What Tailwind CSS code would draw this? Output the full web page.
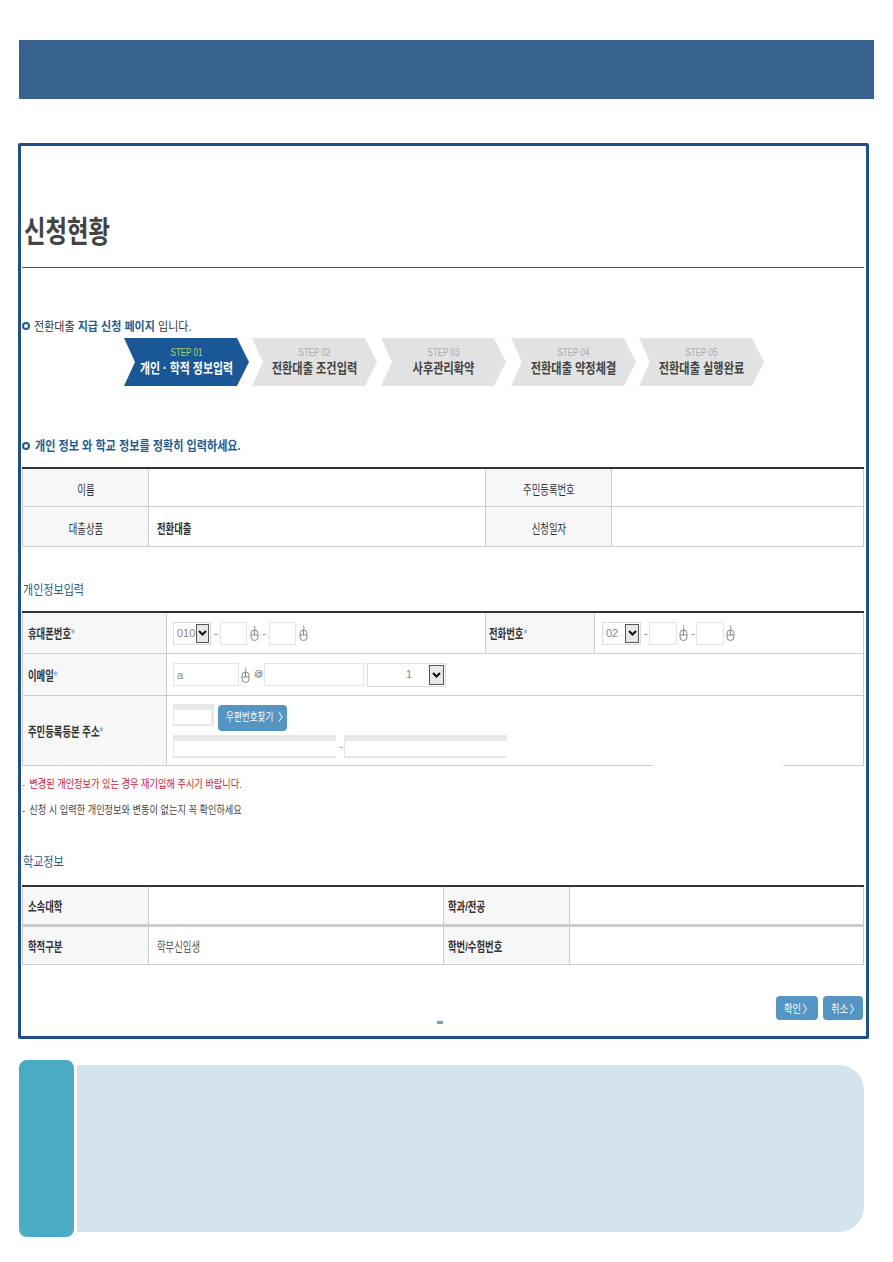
<!DOCTYPE html>
<html lang="ko">
  <head>
    <meta charset="utf-8" />
    <title>신청현황</title>
    <script src="https://cdn.jsdelivr.net/npm/@tailwindcss/browser@4"></script>
  </head>
  <body class="bg-white h-[1262px] overflow-hidden font-['Liberation_Sans','Noto_Sans_CJK_KR',sans-serif] text-[#333]">
    <!-- top bar -->
    <div class="ml-[19px] mt-[40px] w-[855px] h-[59px] bg-[#37618f]"></div>

    <!-- main frame -->
    <div class="relative ml-[18px] mt-[44px] w-[851px] h-[896px] border-[3px] border-[#1f4e8c] rounded-[2px] pl-[1px]">
      <div class="w-[842px]">
        <div class="h-[122px] border-b border-[#555] pt-[64px] pl-[2px]">
          <h1 class="text-[30px] leading-[44px] font-bold text-[#444] whitespace-nowrap origin-left scale-x-[.78]">신청현황</h1>
        </div>

        <div class="mt-[50px] h-[16px] flex items-center">
          <span class="w-[8px] h-[8px] rounded-full border-2 border-[#1f5d92]"></span>
          <p class="ml-[4px] text-[12px] whitespace-nowrap origin-left scale-x-[.92] translate-y-[1px]">전환대출 <b class="text-[#1f5d92]">지급 신청 페이지</b> 입니다.</p>
        </div>

        <!-- steps -->
        <div class="mt-[4px] flex pl-[102px] h-[48px]">
          <div class="w-[125px] h-[48px] bg-[#1a5796] text-center [clip-path:polygon(0_0,113px_0,125px_50%,113px_100%,0_100%,11px_50%)]">
            <p class="pt-[9px] text-[10px] leading-[11px] text-[#a6d96a] scale-x-[.8]">STEP 01</p>
            <p class="text-[14px] leading-[20px] font-bold text-white whitespace-nowrap scale-x-[.78]">개인 · 학적 정보입력</p>
          </div>
          <div class="ml-[3px] w-[125px] h-[48px] bg-[#e2e2e2] text-center [clip-path:polygon(0_0,113px_0,125px_50%,113px_100%,0_100%,11px_50%)]">
            <p class="pt-[9px] text-[10px] leading-[11px] text-[#aaa] scale-x-[.8]">STEP 02</p>
            <p class="text-[14px] leading-[20px] font-bold text-[#444] whitespace-nowrap scale-x-[.8]">전환대출 조건입력</p>
          </div>
          <div class="ml-[4px] w-[125px] h-[48px] bg-[#e2e2e2] text-center [clip-path:polygon(0_0,113px_0,125px_50%,113px_100%,0_100%,11px_50%)]">
            <p class="pt-[9px] text-[10px] leading-[11px] text-[#aaa] scale-x-[.8]">STEP 03</p>
            <p class="text-[14px] leading-[20px] font-bold text-[#444] whitespace-nowrap scale-x-[.8]">사후관리확약</p>
          </div>
          <div class="ml-[5px] w-[125px] h-[48px] bg-[#e2e2e2] text-center [clip-path:polygon(0_0,113px_0,125px_50%,113px_100%,0_100%,11px_50%)]">
            <p class="pt-[9px] text-[10px] leading-[11px] text-[#aaa] scale-x-[.8]">STEP 04</p>
            <p class="text-[14px] leading-[20px] font-bold text-[#444] whitespace-nowrap scale-x-[.8]">전환대출 약정체결</p>
          </div>
          <div class="ml-[3px] w-[125px] h-[48px] bg-[#e2e2e2] text-center [clip-path:polygon(0_0,113px_0,125px_50%,113px_100%,0_100%,11px_50%)]">
            <p class="pt-[9px] text-[10px] leading-[11px] text-[#aaa] scale-x-[.8]">STEP 05</p>
            <p class="text-[14px] leading-[20px] font-bold text-[#444] whitespace-nowrap scale-x-[.8]">전환대출 실행완료</p>
          </div>
        </div>

        <div class="mt-[52px] h-[16px] flex items-center">
          <span class="w-[8px] h-[8px] rounded-full border-2 border-[#1f5d92]"></span>
          <p class="ml-[5px] text-[13px] font-bold text-[#1f5d92] whitespace-nowrap origin-left scale-x-[.855]">개인 정보 와 학교 정보를 정확히 입력하세요.</p>
        </div>

        <!-- table 1 -->
        <table class="mt-[13px] w-[842px] table-fixed border-separate border-spacing-0 border-t-2 border-[#333] text-[13px] [&_td>span]:translate-y-[2px]">
          <colgroup><col class="w-[126px]" /><col class="w-[337px]" /><col class="w-[126px]" /><col /></colgroup>
          <tr class="h-[38px]">
            <td class="bg-[#f7f7f8] border-l border-b border-[#ccc] text-center"><span class="inline-block scale-x-[.72]">이름</span></td>
            <td class="border-l border-b border-[#ccc]"></td>
            <td class="bg-[#f7f7f8] border-l border-b border-[#ccc] text-center"><span class="inline-block scale-x-[.72] whitespace-nowrap">주민등록번호</span></td>
            <td class="border-l border-r border-b border-[#ccc]"></td>
          </tr>
          <tr class="h-[40px]">
            <td class="bg-[#f7f7f8] border-l border-b border-[#ccc] text-center"><span class="inline-block scale-x-[.72]">대출상품</span></td>
            <td class="border-l border-b border-[#ccc] pl-[8px]"><span class="inline-block origin-left scale-x-[.72] font-bold">전환대출</span></td>
            <td class="bg-[#f7f7f8] border-l border-b border-[#ccc] text-center"><span class="inline-block scale-x-[.72]">신청일자</span></td>
            <td class="border-l border-r border-b border-[#ccc]"></td>
          </tr>
        </table>

        <h2 class="mt-[35px] ml-[1px] h-[16px] text-[13px] leading-[16px] text-[#1f5d92] origin-left scale-x-[.85] whitespace-nowrap">개인정보입력</h2>

        <!-- table 2 -->
        <table class="mt-[13px] w-[842px] table-fixed border-separate border-spacing-0 border-t-2 border-[#333] text-[13px] [&_td>span]:translate-y-[1px]">
          <colgroup><col class="w-[144px]" /><col class="w-[319px]" /><col class="w-[109px]" /><col /></colgroup>
          <tr class="h-[41px]">
            <td class="bg-[#f7f7f8] border-l border-b border-[#ccc] pl-[5px] whitespace-nowrap"><span class="inline-block origin-left scale-x-[.72] font-bold">휴대폰번호<i class="text-[#7fb4d8] not-italic">*</i></span></td>
            <td class="border-l border-b border-[#ccc] pl-[6px]">
              <div class="flex items-center text-[11px] text-[#888]">
                <div class="w-[38px] h-[23px] border border-[#ddd] flex items-center justify-between pl-[3px] pr-[1px]">010<span class="w-[13px] h-[19px] border border-[#555] bg-[#e8e8e8] flex items-center justify-center"><svg width="9" height="6" viewBox="0 0 9 6"><path d="M1 1l3.5 3.5L8 1" fill="none" stroke="#111" stroke-width="2"/></svg></span></div>
                <span class="mx-[3px] w-[3px] text-center">-</span>
                <div class="w-[27px] h-[23px] border border-[#e5e5e5]"></div>
                <svg class="ml-[3px]" width="9" height="16" viewBox="0 0 9 16"><path d="M4.5 0.5c0 1.5 1 2 0 4.500M4.500 5v5M1 10h7M1 8.500a3.500 3.500 0 0 1 7 0v3.500a3.500 3.500 0 0 1-7 0z" fill="none" stroke="#888" stroke-width="1"/></svg>
                <span class="mx-[3px] w-[4px] text-center">-</span>
                <div class="w-[27px] h-[23px] border border-[#e5e5e5]"></div>
                <svg class="ml-[3px]" width="9" height="16" viewBox="0 0 9 16"><path d="M4.5 0.5c0 1.5 1 2 0 4.500M4.500 5v5M1 10h7M1 8.500a3.500 3.500 0 0 1 7 0v3.500a3.500 3.500 0 0 1-7 0z" fill="none" stroke="#888" stroke-width="1"/></svg>
              </div>
            </td>
            <td class="bg-[#f7f7f8] border-l border-b border-[#ccc] pl-[3px] whitespace-nowrap"><span class="inline-block origin-left scale-x-[.72] font-bold">전화번호<i class="text-[#7fb4d8] not-italic">*</i></span></td>
            <td class="border-l border-r border-b border-[#ccc] pl-[7px]">
              <div class="flex items-center text-[11px] text-[#888]">
                <div class="w-[39px] h-[23px] border border-[#ddd] flex items-center justify-between pl-[3px] pr-[1px]">02<span class="w-[14px] h-[19px] border border-[#555] bg-[#e8e8e8] flex items-center justify-center"><svg width="9" height="6" viewBox="0 0 9 6"><path d="M1 1l3.500 3.500L8 1" fill="none" stroke="#111" stroke-width="2"/></svg></span></div>
                <span class="mx-[3px] w-[2px] text-center">-</span>
                <div class="w-[28px] h-[23px] border border-[#e5e5e5]"></div>
                <svg class="ml-[2px]" width="9" height="16" viewBox="0 0 9 16"><path d="M4.5 0.5c0 1.5 1 2 0 4.500M4.500 5v5M1 10h7M1 8.500a3.500 3.500 0 0 1 7 0v3.500a3.500 3.500 0 0 1-7 0z" fill="none" stroke="#888" stroke-width="1"/></svg>
                <span class="mx-[3px] w-[2px] text-center">-</span>
                <div class="w-[28px] h-[23px] border border-[#e5e5e5]"></div>
                <svg class="ml-[2px]" width="9" height="16" viewBox="0 0 9 16"><path d="M4.5 0.5c0 1.5 1 2 0 4.500M4.500 5v5M1 10h7M1 8.500a3.500 3.500 0 0 1 7 0v3.500a3.500 3.500 0 0 1-7 0z" fill="none" stroke="#888" stroke-width="1"/></svg>
              </div>
            </td>
          </tr>
          <tr class="h-[42px]">
            <td class="bg-[#f7f7f8] border-l border-b border-[#ccc] pl-[5px] whitespace-nowrap"><span class="inline-block origin-left scale-x-[.72] font-bold">이메일<i class="text-[#7fb4d8] not-italic">*</i></span></td>
            <td colspan="3" class="border-l border-r border-b border-[#ccc] pl-[6px]">
              <div class="flex items-center text-[11px] text-[#888]">
                <div class="w-[66px] h-[23px] border border-[#e5e5e5] pl-[3px] leading-[23px]">a</div>
                <svg class="ml-[2px]" width="9" height="16" viewBox="0 0 9 16"><path d="M4.5 0.5c0 1.5 1 2 0 4.500M4.500 5v5M1 10h7M1 8.500a3.500 3.500 0 0 1 7 0v3.500a3.500 3.500 0 0 1-7 0z" fill="none" stroke="#888" stroke-width="1"/></svg>
                <span class="ml-[4px] w-[8px] text-[9px] text-[#555]">@</span>
                <div class="ml-[2px] w-[100px] h-[23px] border border-[#e5e5e5]"></div>
                <div class="ml-[3px] w-[79px] h-[24px] border border-[#ddd] flex items-center justify-between pl-[38px] pr-[1px]">1<span class="w-[15px] h-[20px] border border-[#555] bg-[#e8e8e8] flex items-center justify-center"><svg width="9" height="6" viewBox="0 0 9 6"><path d="M1 1l3.500 3.500L8 1" fill="none" stroke="#111" stroke-width="2"/></svg></span></div>
              </div>
            </td>
          </tr>
          <tr class="h-[70px]">
            <td class="bg-[#f7f7f8] border-l border-b border-[#ccc] pl-[5px] whitespace-nowrap"><span class="inline-block origin-left scale-x-[.72] font-bold">주민등록등본 주소<i class="text-[#7fb4d8] not-italic">*</i></span></td>
            <td colspan="3" class="border-l border-r border-b border-[#ccc] pl-[6px]">
              <div class="flex items-start h-[26px]">
                <div class="w-[41px] h-[22px] border-t-[6px] border-l-[1px] border-r-[3px] border-b-2 border-[#e8e8e8]"></div>
                <div class="ml-[4px] mt-[1px] w-[69px] h-[26px] rounded-[4px] bg-[#5495c4] flex items-center pl-[8px] text-[11px] text-white whitespace-nowrap"><span class="inline-block origin-left scale-x-[.78]">우편번호찾기</span><span class="-ml-[9px]">〉</span></div>
              </div>
              <div class="mt-[5px] flex items-center text-[11px] text-[#888]">
                <div class="w-[163px] h-[23px] border-t-[6px] border-l border-b-2 border-[#e8e8e8]"></div>
                <span class="mx-[3px] w-[2px] text-center">-</span>
                <div class="w-[163px] h-[23px] border-t-[6px] border-l border-b-2 border-[#e8e8e8]"></div>
              </div>
            </td>
          </tr>
        </table>

        <p class="mt-[10px] h-[16px] text-[11.5px] leading-[16px] text-[#888] whitespace-nowrap origin-left scale-x-[.8]">- <span class="ml-[2px] text-[#d4142a]">변경된 개인정보가 있는 경우 재기입해 주시기 바랍니다.</span></p>
        <p class="mt-[10px] h-[16px] text-[11.5px] leading-[16px] text-[#444] whitespace-nowrap origin-left scale-x-[.8]">- <span class="ml-[2px]">신청 시 입력한 개인정보와 변동이 없는지 꼭 확인하세요</span></p>

        <h2 class="mt-[36px] ml-[1px] h-[16px] text-[13px] leading-[16px] text-[#1f5d92] origin-left scale-x-[.85] whitespace-nowrap">학교정보</h2>

        <!-- table 3 -->
        <table class="mt-[15px] w-[842px] table-fixed border-separate border-spacing-0 border-t-2 border-[#333] text-[13px] [&_td>span]:translate-y-[1px]">
          <colgroup><col class="w-[126px]" /><col class="w-[295px]" /><col class="w-[126px]" /><col /></colgroup>
          <tr class="h-[40px]">
            <td class="bg-[#f7f7f8] border-l border-b-[3px] border-[#ccc] pl-[5px]"><span class="inline-block origin-left scale-x-[.72] font-bold">소속대학</span></td>
            <td class="border-l border-b-[3px] border-[#ccc]"></td>
            <td class="bg-[#f7f7f8] border-l border-b-[3px] border-[#ccc] pl-[4px]"><span class="inline-block origin-left scale-x-[.72] font-bold">학과/전공</span></td>
            <td class="border-l border-r border-b-[3px] border-[#ccc]"></td>
          </tr>
          <tr class="h-[38px]">
            <td class="bg-[#f7f7f8] border-l border-b border-[#ccc] pl-[5px]"><span class="inline-block origin-left scale-x-[.72] font-bold">학적구분</span></td>
            <td class="border-l border-b border-[#ccc] pl-[8px] text-[#555]"><span class="inline-block origin-left scale-x-[.72]">학부신입생</span></td>
            <td class="bg-[#f7f7f8] border-l border-b border-[#ccc] pl-[4px] whitespace-nowrap"><span class="inline-block origin-left scale-x-[.72] font-bold">학번/수험번호</span></td>
            <td class="border-l border-r border-b border-[#ccc]"></td>
          </tr>
        </table>

        <div class="mt-[31px] flex justify-end pr-[1px] text-[11px] text-white">
          <div class="w-[42px] h-[24px] rounded-[4px] bg-[#5495c4] flex items-center pl-[8px] pt-[3px] whitespace-nowrap"><span class="inline-block origin-left scale-x-[.85]">확인</span><span class="-ml-[2px]">〉</span></div>
          <div class="ml-[5px] w-[40px] h-[24px] rounded-[4px] bg-[#5495c4] flex items-center pl-[8px] pt-[3px] whitespace-nowrap"><span class="inline-block origin-left scale-x-[.85]">취소</span><span class="-ml-[2px]">〉</span></div>
        </div>
      </div>

      <!-- gap in the table's bottom rule, small dash at the foot of the frame -->
      <div class="absolute left-[632px] top-[619px] w-[130px] h-[4px] bg-white"></div>
      <div class="absolute left-[416px] top-[875px] w-[6px] h-[3px] bg-[#7d9bb8]"></div>
    </div>

    <!-- bottom note -->
    <div class="mt-[21px] ml-[19px] flex">
      <div class="w-[55px] h-[177px] rounded-[8px] bg-[#4aacc5]"></div>
      <div class="ml-[3px] mt-[5px] w-[787px] h-[167px] rounded-r-[25px] bg-[#d3e4ec]"></div>
    </div>
  </body>
</html>
